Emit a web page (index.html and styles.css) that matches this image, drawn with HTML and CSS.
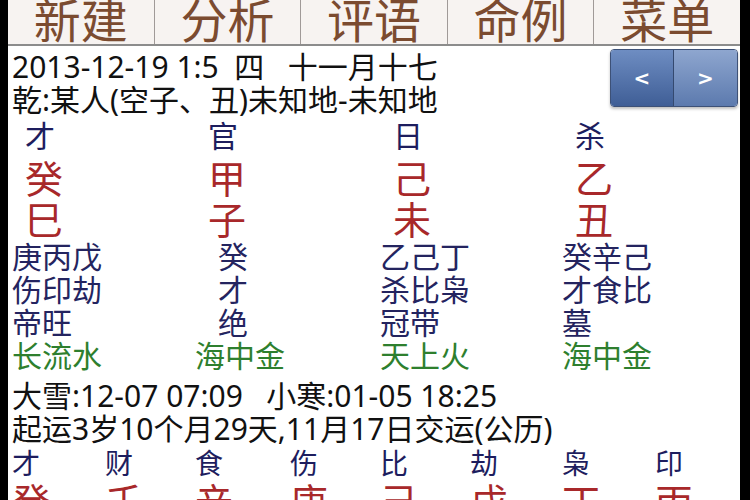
FILE: index.html
```html
<!DOCTYPE html>
<html lang="zh-CN">
<head>
    <meta charset="UTF-8">
    <title>八字排盘</title>
    <link rel="stylesheet" href="styles.css">
</head>
<body>
    <div class="screen">
        <!-- Top menu -->
        <div class="tabs">
            <div class="tab"><span>新建</span></div>
            <div class="tab"><span>分析</span></div>
            <div class="tab"><span>评语</span></div>
            <div class="tab"><span>命例</span></div>
            <div class="tab last"><span>菜单</span></div>
        </div>

        <div class="content">
            <div class="head">
                <div class="info">
                    <p class="line">2013-12-19 1:5&nbsp; 四&nbsp; &nbsp;十一月十七</p>
                    <p class="line">乾:某人(空子、丑)未知地-未知地</p>
                </div>
                <div class="nav">
                    <button class="nav-btn prev">&lt;</button>
                    <button class="nav-btn next">&gt;</button>
                </div>
            </div>

            <!-- Four pillars -->
            <div class="pillars">
                <div class="pillar">
                    <p class="god">才</p>
                    <p class="stem">癸</p>
                    <p class="stem">巳</p>
                    <p class="hidden">庚丙戊</p>
                    <p class="hidden">伤印劫</p>
                    <p class="hidden">帝旺</p>
                    <p class="nayin">长流水</p>
                </div>
                <div class="pillar">
                    <p class="god">官</p>
                    <p class="stem">甲</p>
                    <p class="stem">子</p>
                    <p class="hidden single">癸</p>
                    <p class="hidden single">才</p>
                    <p class="hidden single">绝</p>
                    <p class="nayin">海中金</p>
                </div>
                <div class="pillar">
                    <p class="god">日</p>
                    <p class="stem">己</p>
                    <p class="stem">未</p>
                    <p class="hidden">乙己丁</p>
                    <p class="hidden">杀比枭</p>
                    <p class="hidden">冠带</p>
                    <p class="nayin">天上火</p>
                </div>
                <div class="pillar">
                    <p class="god">杀</p>
                    <p class="stem">乙</p>
                    <p class="stem">丑</p>
                    <p class="hidden">癸辛己</p>
                    <p class="hidden">才食比</p>
                    <p class="hidden">墓</p>
                    <p class="nayin">海中金</p>
                </div>
            </div>

            <p class="line terms">大雪:12-07 07:09&nbsp; &nbsp;小寒:01-05 18:25</p>
            <p class="line">起运3岁10个月29天,11月17日交运(公历)</p>

            <!-- Luck pillars -->
            <div class="luck">
                <span class="god small">才</span>
                <span class="god small">财</span>
                <span class="god small">食</span>
                <span class="god small">伤</span>
                <span class="god small">比</span>
                <span class="god small">劫</span>
                <span class="god small">枭</span>
                <span class="god small">印</span>
                <span class="stem">癸</span>
                <span class="stem">壬</span>
                <span class="stem">辛</span>
                <span class="stem">庚</span>
                <span class="stem">己</span>
                <span class="stem">戊</span>
                <span class="stem">丁</span>
                <span class="stem">丙</span>
            </div>
        </div>
    </div>
</body>
</html>
```

FILE: styles.css
```css
body {
    margin: 0;
    padding: 0;
    background-color: #000;
    font-family: "Noto Sans", "Noto Sans CJK SC", sans-serif;
}
p {
    margin: 0;
}
.screen {
    margin-left: 8px;
    width: 732px;
    height: 500px;
    overflow: hidden;
    background-color: #fff;
}
.tabs {
    display: flex;
    height: 44px;
    border-bottom: 2px solid #8c8c8c;
    background-color: #f7f3f1;
    overflow: hidden;
}
.tab {
    flex: 1;
    text-align: center;
    border-right: 1px solid #a09a98;
}
.tab.last {
    border-right: none;
}
.tab span {
    display: block;
    margin-top: -3px;
    font-size: 47px;
    line-height: 46px;
    color: #7b4b30;
}
.content {
    padding: 4px 0 0 4px;
}
.head {
    display: flex;
    align-items: flex-start;
}
.info {
    flex: 1;
}
.line {
    font-size: 30px;
    line-height: 33px;
    color: #111;
    white-space: nowrap;
}
.nav {
    display: flex;
    margin-top: -1px;
    margin-right: 2px;
    height: 56px;
    border: 1px solid #3d5177;
    border-radius: 4px;
    overflow: hidden;
    box-shadow: 0 2px 3px rgba(0, 0, 0, 0.25);
}
.nav-btn {
    width: 63px;
    border: none;
    padding: 0;
    color: #fff;
    font-family: "DejaVu Sans", sans-serif;
    font-weight: bold;
    font-size: 20px;
}
.nav-btn.prev {
    background: linear-gradient(#6e8dc2, #3f5e96);
    border-right: 1px solid #34496f;
}
.nav-btn.next {
    background: linear-gradient(#8ea6cf, #5c7aae);
}
.pillars {
    display: grid;
    grid-template-columns: 183px 185px 182px 1fr;
    margin-top: 3px;
}
.god {
    font-size: 30px;
    line-height: 33px;
    color: #1d1d5e;
    padding-left: 13px;
}
.stem {
    font-size: 38px;
    line-height: 41px;
    color: #a8282a;
    padding-left: 13px;
}
.pillar .stem:nth-child(2) {
    margin-top: 6px;
}
.hidden {
    font-size: 30px;
    line-height: 33px;
    color: #24245f;
}
.hidden.single {
    padding-left: 23px;
}
.nayin {
    font-size: 30px;
    line-height: 33px;
    color: #2e7f2e;
}
.terms {
    margin-top: 7px;
}
.luck {
    display: grid;
    grid-template-columns: 93px 90px 95px 90px 90px 92px 93px 1fr;
}
.luck .god,
.luck .stem {
    padding-left: 0;
}
.god.small {
    font-size: 28px;
    line-height: 36px;
}
```
